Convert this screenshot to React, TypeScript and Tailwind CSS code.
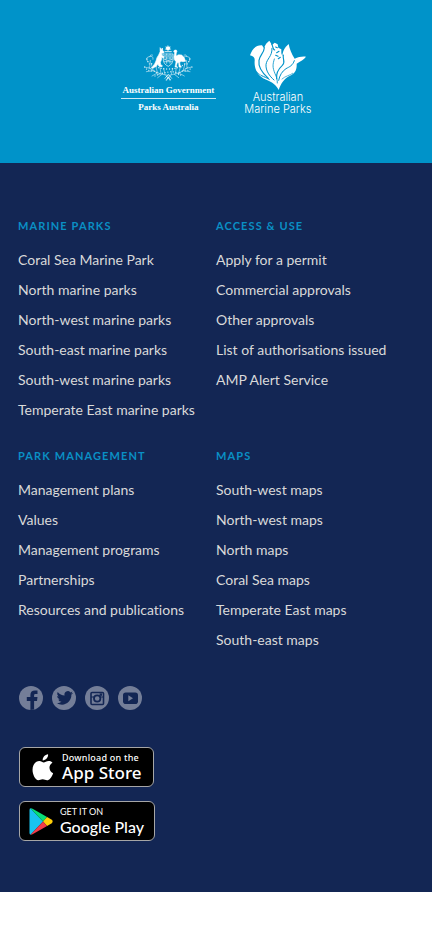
import type { ReactNode } from "react";

const sections = [
  {
    title: "Marine parks",
    links: [
      "Coral Sea Marine Park",
      "North marine parks",
      "North-west marine parks",
      "South-east marine parks",
      "South-west marine parks",
      "Temperate East marine parks",
    ],
  },
  {
    title: "Access & use",
    links: [
      "Apply for a permit",
      "Commercial approvals",
      "Other approvals",
      "List of authorisations issued",
      "AMP Alert Service",
    ],
  },
  {
    title: "Park management",
    links: ["Management plans", "Values", "Management programs", "Partnerships", "Resources and publications"],
  },
  {
    title: "Maps",
    links: ["South-west maps", "North-west maps", "North maps", "Coral Sea maps", "Temperate East maps", "South-east maps"],
  },
];

function Crest() {
  return (
    <svg viewBox="99 30 156 114" className="h-[38px] w-[52px]" fill="none" stroke="white" strokeLinecap="round" aria-hidden="true">
      {/* star */}
      <path d="M177 35l2 4 5-1-2 4 3 4-5 1-3 3-3-3-5-1 3-4-2-4 5 1z" fill="white" strokeWidth="1" />
      <path d="M168 53h19" strokeWidth="2.5" strokeDasharray="3 1.5" />
      {/* shield */}
      <path d="M163 60h29v19q-1 12-14 18-14-6-15-18z" strokeWidth="2" />
      <path d="M163 72h29M173 60v28M183 60v28M166 83h22" strokeWidth="1.6" />
      <path d="M166 66h4M176 66h4M186 66h3M176 79h4M167 77h3M186 77h3" strokeWidth="2.4" />
      {/* kangaroo */}
      <path
        d="M154 42l3 5 3-5 1 7 4 5-1 3-6 1 1 7 6 3-1 3-6-1-1 8-3 7 1 7 5 3-1 3-9-1-3-6-5 5-9 6-6 0 8-8 6-13 3-10 5-8 4-9z"
        fill="white"
        strokeWidth="2"
      />
      {/* emu */}
      <path
        d="M194 52l3-4 5 0 2 4-2 5-1 9 8-4 9 1 7 7 5 12-8 1-6-1-4 4 2 10 4 3h-8l-1-13-4 0-3 10 3 3h-7l3-16-5-6-1-9 2-12z"
        fill="white"
        strokeWidth="1.5"
      />
      {/* wattle, left and right */}
      <g strokeWidth="2" opacity="0.75">
        <path d="M176 124C157 120 139 118 119 100M160 120l-14 11M147 116l-18 10M134 110l-22 3M126 104l-19-5M122 101l2-22M132 108l-5-19M145 114l-5-18M156 119l-3-18M168 122l-4-19" />
        <path d="M180 124C199 120 216 118 237 100M195 120l14 11M208 116l18 10M221 110l22 3M229 104l19-5M234 101l-2-22M223 108l5-19M210 114l5-18M199 119l3-18M187 122l4-19" />
        <path d="M118 84q-12-12 2-16t12 8M238 84q12-12-2-16t-12 8M122 68q2-9 9-5M234 68q-2-9-9-5" />
      </g>
      <g strokeWidth="4" strokeDasharray="0.1 8" opacity="0.75">
        <path d="M114 75q3 14 12 18M242 75q-3 14-12 18M107 99q8 12 24 12t18 18M249 99q-8 12-24 12t-18 18" />
        <path d="M128 89q17 16 49 16t51-16M138 126q16-8 40-12t40 12" />
      </g>
      <path d="M168 133l10-12 10 12M173 139l5-11 5 11M171 126l14 11M185 126l-14 11" strokeWidth="2" />
    </svg>
  );
}

function Flower() {
  return (
    <svg viewBox="45 15 171 153" className="h-[51px] w-[57px]" aria-hidden="true">
      <path
        d="M48 61C54 42 65 30 84 31l6 9c3-11 9-18 16-23l8 13 8-7 9 5 2 10 9 5v12l3 9c1-14 6-26 19-37 3 15 8 29 18 44 11-5 21-7 34-6-6 8-17 14-28 21 1 20-6 29-20 36-16 7-27 22-34 43-7-15-19-24-37-31C71 125 60 101 62 77c1-8-3-13-14-16z"
        fill="white"
      />
      <g fill="none" stroke="#0093c9" strokeLinecap="round">
        <path d="M91 38C90 54 77 61 75 76c-3 19 10 38 28 54" strokeWidth="3.5" />
        <path d="M114 40c1 25-16 31-18 49-1 18 10 34 24 46" strokeWidth="3" />
        <path d="M121 72c-5 17-6 24 2 44 5 10 7 18 7 28" strokeWidth="2.5" />
        <path d="M148 60c-3 15 8 20-3 31-13 12-19 24-17 40" strokeWidth="3.5" />
        <path d="M181 77c-5 15-14 18-25 24-12 8-19 20-22 35" strokeWidth="3" />
        <path d="M113 27c5 9 3 16 9 18M125 36l5 2M128 53l7-4M125 61l7 3M133 71l6-4" strokeWidth="3.5" />
        <path d="M68 110c9 13 23 13 35 21M82 122c9 5 17 6 25 12" strokeWidth="2" />
        <path d="M176 115c-9 7-21 7-32 17" strokeWidth="2" />
      </g>
    </svg>
  );
}

function Social({ label, children }: { label: string; children: ReactNode }) {
  return (
    <a href="#" aria-label={label} className="block size-6">
      <svg viewBox="0 0 24 24" className="size-6">
        <circle cx="12" cy="12" r="12" fill="#747e98" />
        {children}
      </svg>
    </a>
  );
}

function AppleLogo() {
  return (
    <svg viewBox="64 38 64 80" className="h-[27px] w-[22px] shrink-0" fill="white" aria-hidden="true">
      <path d="M111 39c1 9-7 18-16 18-1-9 7-17 16-18z" />
      <path d="M124 64c-13 8-11 25 2 31-4 12-11 21-18 21-5 0-7-3-13-3s-8 3-13 3c-8 0-17-16-17-31 0-17 10-26 20-26 6 0 10 4 13 4 4 0 8-4 15-4 5 0 9 2 11 5z" />
    </svg>
  );
}

function PlayLogo() {
  return (
    <svg viewBox="58 38 70 80" className="h-[27px] w-6 shrink-0" aria-hidden="true">
      <path d="M62 39q-3 1-3 5v68q0 4 3 5l37-39z" fill="#18c3ef" />
      <path d="M62 39q2-1 6 1l43 25-12 13z" fill="#08df78" />
      <path d="M99 78l12-13 14 8q5 5 0 10l-14 8z" fill="#ffce08" />
      <path d="M62 117q2 1 6-1l43-25-12-13z" fill="#f33b4a" />
    </svg>
  );
}

export default function App() {
  return (
    <div className="bg-white font-['Lato',sans-serif] [font-variant-ligatures:none]">
      <header className="flex justify-center gap-7 bg-[#0093c9] pt-10 pb-12 text-white">
        <a href="#" className="flex flex-col items-center pt-1 font-['Liberation_Serif',serif] text-[9px] leading-4 font-bold">
          <Crest />
          <span className="border-b border-white/80 px-0.5">Australian Government</span>
          <span>Parks Australia</span>
        </a>
        <a href="#" className="flex flex-col items-center font-['Inter',sans-serif] text-[11px] leading-3 font-light">
          <Flower />
          <span>Australian</span>
          <span>Marine Parks</span>
        </a>
      </header>
      <footer className="bg-[#132654] px-[18px] pt-[53px] pb-[51px]">
        <nav className="grid grid-cols-2 gap-y-[21px]">
          {sections.map((section) => (
            <section key={section.title}>
              <h2 className="mb-[9px] text-[11px] leading-5 font-bold tracking-widest text-[#0a8fc4] uppercase">{section.title}</h2>
              <ul>
                {section.links.map((link) => (
                  <li key={link} className="text-sm leading-[30px] whitespace-nowrap text-[#d9d9d9]">
                    <a href="#">{link}</a>
                  </li>
                ))}
              </ul>
            </section>
          ))}
        </nav>
        <div className="mt-[31px] flex gap-[9px] pl-px">
          <Social label="Facebook">
            <path d="M11.400 24v-9H7.800v-3.900h3.600V9c0-3.200 1.700-4.600 4.600-4.600h2.500v3.700h-1.900c-1.200 0-1.500.5-1.500 1.500v1.500h3.400l-.5 3.900h-2.900v8.600z" fill="#132654" />
          </Social>
          <Social label="Twitter">
            <path transform="translate(1 -0.300)" d="M20 7.200c-.6.300-1.200.5-1.900.5.700-.4 1.200-1 1.400-1.800-.6.400-1.400.7-2.100.8A3.350 3.350 0 0 0 11.600 9.800C8.900 9.700 6.400 8.400 4.700 6.300c-.9 1.500-.4 3.400 1 4.400-.5 0-1-.2-1.500-.4 0 1.600 1.100 2.900 2.700 3.300-.5.100-1 .2-1.500.1.400 1.300 1.600 2.300 3.100 2.300A6.700 6.700 0 0 1 3.600 17.400C10.500 21.600 18.600 17 18.400 8.900c.6-.5 1.200-1.100 1.600-1.700z" fill="#132654" />
          </Social>
          <Social label="Instagram">
            <rect x="6" y="6.500" width="12.500" height="12" rx="1" fill="none" stroke="#132654" strokeWidth="1.600" />
            <path d="M6 11h3.500M15 11h3.500" stroke="#132654" strokeWidth="1.200" />
            <circle cx="12.200" cy="12.500" r="3.200" fill="none" stroke="#132654" strokeWidth="1.800" />
            <rect x="14.600" y="7.400" width="2.400" height="2.400" fill="#132654" />
          </Social>
          <Social label="YouTube">
            <rect x="5" y="6.500" width="15" height="11.500" rx="2.800" fill="#132654" />
            <path d="M10.300 9.300v6l4.700-3z" fill="#747e98" />
          </Social>
        </div>
        <div className="mt-[37px] flex flex-col items-start gap-[14px] pl-px text-white">
          <a href="#" className="flex h-10 w-[135px] items-center gap-2 rounded-md border border-[#a6a6a6] bg-black pl-3 font-['Noto_Sans',sans-serif] whitespace-nowrap">
            <AppleLogo />
            <span className="flex flex-col">
              <span className="text-[9px] leading-3 font-medium tracking-wide">Download on the</span>
              <span className="text-[17px] leading-[18px] font-medium">App Store</span>
            </span>
          </a>
          <a href="#" className="flex h-10 w-[136px] items-center gap-[7px] rounded-md border border-[#a6a6a6] bg-black pl-[9px] whitespace-nowrap">
            <PlayLogo />
            <span className="flex flex-col">
              <span className="text-[9px] leading-3">GET IT ON</span>
              <span className="text-[16px] leading-[18px] font-medium">Google Play</span>
            </span>
          </a>
        </div>
      </footer>
    </div>
  );
}
